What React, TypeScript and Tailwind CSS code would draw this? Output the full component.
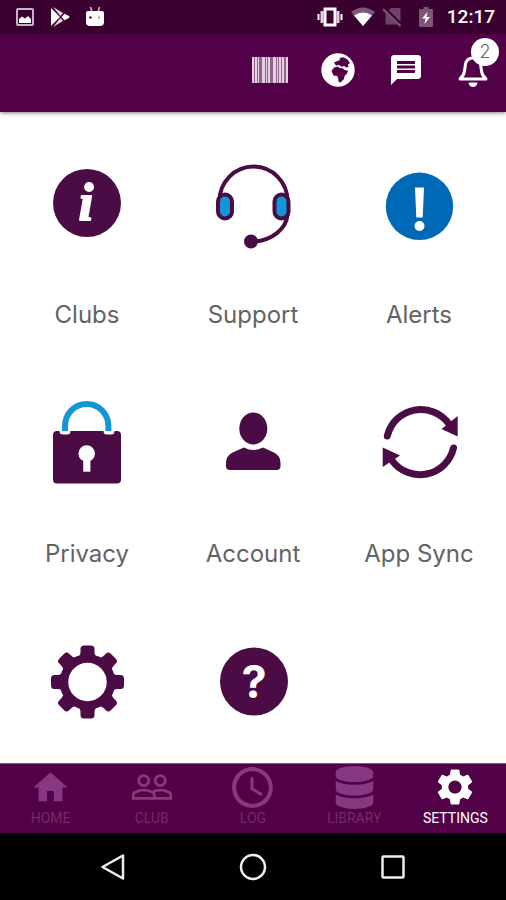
import { useState } from "react";
import { FaDatabase } from "react-icons/fa";
import { MdAccessTime, MdHome, MdMessage, MdPeopleOutline, MdSettings } from "react-icons/md";

const PURPLE = "#4b0b45";
const BLUE = "#1296d8";

const ClubsIcon = () => (
    <svg viewBox="0 0 88 88" className="w-22 h-22">
        <circle cx="44" cy="44" r="34" fill={PURPLE} />
        <text x="43" y="61" textAnchor="middle" fontSize="52" fontWeight="700" fontStyle="italic" fontFamily="Liberation Serif, serif" fill="#fff" stroke="#fff" strokeWidth="2" strokeLinejoin="round">i</text>
    </svg>
);

const SupportIcon = () => (
    <svg viewBox="0 0 88 88" className="w-22 h-22 overflow-visible" fill="none" stroke={PURPLE} strokeWidth="4">
        <path d="M10.5 42a34 34.500 0 0 1 68 0" />
        <path d="M78.500 56C77 70 63 81.500 45 82.500" />
        <rect x="9" y="35.500" width="14" height="24" rx="7" fill={BLUE} />
        <rect x="65.500" y="35.500" width="14" height="24" rx="7" fill={BLUE} />
        <circle cx="42" cy="82.500" r="5" fill={PURPLE} />
    </svg>
);

const AlertsIcon = () => (
    <svg viewBox="0 0 88 88" className="w-22 h-22">
        <circle cx="44.500" cy="47.300" r="33.700" fill="#0069b5" />
        <path d="M40 28.500h9l-1.300 30h-6.400z" fill="#fff" />
        <circle cx="44.500" cy="67" r="5" fill="#fff" />
    </svg>
);

const PrivacyIcon = () => (
    <svg viewBox="0 0 88 88" className="w-22 h-22">
        <path d="M14 33h2.500q0 3.500 3.500 3.500h4q3.500 0 3.500-3.500h33q0 3.500 3.500 3.500h4q3.500 0 3.500-3.500h2.500q4 0 4 4v44.500q0 4-4 4H14q-4 0-4-4V37q0-4 4-4z" fill={PURPLE} />
        <path d="M22 33v-5a21.700 22 0 0 1 43.400 0v5" fill="none" stroke={BLUE} strokeWidth="6" />
        <circle cx="43.700" cy="55.500" r="8.300" fill="#fff" />
        <path d="M40.200 60h7.200v13.700h-7.200z" fill="#fff" />
    </svg>
);

const AccountIcon = () => (
    <svg viewBox="0 0 88 88" className="w-22 h-22" fill={PURPLE}>
        <ellipse cx="44.300" cy="30.500" rx="14" ry="16" />
        <path d="M35 49.500q9.500 5 19 0L65 54.500q6.500 3.500 6.500 10V68q0 4-4 4H21q-4 0-4-4v-3.500q0-6.500 6.500-10z" />
    </svg>
);

const SyncIcon = () => (
    <svg viewBox="0 0 88 88" className="w-22 h-22">
        <g fill="none" stroke={PURPLE} strokeWidth="7" strokeLinecap="round">
            <path d="M12.300 38A34.500 34.500 0 0 1 74 26" />
            <path d="M78.500 50A34.500 34.500 0 0 1 17 62.500" />
        </g>
        <path d="M82.700 18v20.500L66.500 31z" fill={PURPLE} />
        <path d="M7.700 49.500v19.500L25 57.500z" fill={PURPLE} />
    </svg>
);

const GearIcon = () => (
    <svg viewBox="0 0 88 88" className="w-22 h-22">
        <circle cx="44.500" cy="45" r="23.500" fill="none" stroke={PURPLE} strokeWidth="8.500" />
        {[0, 45, 90, 135, 180, 225, 270, 315].map((angle) => (
            <path key={angle} transform={`rotate(${angle} 44.5 45)`} d="M33.500 21q4-2 4-6v-3q0-3.500 3.500-3.500h7q3.500 0 3.500 3.500v3q0 4 4 6z" fill={PURPLE} />
        ))}
    </svg>
);

const HelpIcon = () => (
    <svg viewBox="0 0 88 88" className="w-22 h-22">
        <circle cx="45" cy="44.500" r="34" fill={PURPLE} />
        <text x="45" y="61" textAnchor="middle" fontSize="45" fontWeight="700" fontFamily="Inter, sans-serif" fill="#fff">?</text>
    </svg>
);

const tiles = [
    { name: "Clubs", icon: ClubsIcon },
    { name: "Support", icon: SupportIcon },
    { name: "Alerts", icon: AlertsIcon },
    { name: "Privacy", icon: PrivacyIcon },
    { name: "Account", icon: AccountIcon },
    { name: "App Sync", icon: SyncIcon },
    { icon: GearIcon },
    { icon: HelpIcon },
];

const tabs = [
    { name: "HOME", icon: MdHome, size: 41 },
    { name: "CLUB", icon: MdPeopleOutline, size: 44 },
    { name: "LOG", icon: MdAccessTime, size: 49 },
    { name: "LIBRARY", icon: FaDatabase, size: 43 },
    { name: "SETTINGS", icon: MdSettings, size: 44 },
];

function StatusBar() {
    return (
        <div className="h-[34px] shrink-0 bg-[#3a0030] flex items-center justify-between pl-4 pr-[11px] text-white">
            <div className="flex items-center gap-4">
                <svg viewBox="0 0 18 18" width="18" height="18">
                    <rect x="1" y="1" width="16" height="16" rx="1" fill="none" stroke="#c9b3c6" strokeWidth="2" />
                    <path d="M3 15v-4l3-2.500 3 2 3-2.500 3 3V15z" fill="#fff" />
                </svg>
                <svg viewBox="0 0 20 20" width="20" height="20">
                    <path d="M1 1l9 9-9 9z" fill="#fff" />
                    <path d="M3 0l10 6-2.500 3zM3 20l10-6-2.500-3z" fill="#e6d8e4" />
                    <path d="M11.500 10L14.500 6.800 19 9q1 1 0 2l-4.500 2.200z" fill="#fff" />
                </svg>
                <svg viewBox="0 0 18 20" width="18" height="20">
                    <path d="M4.500 0l1.500 5M13.500 0L12 5" stroke="#d8c6d5" strokeWidth="1.500" />
                    <path d="M0 6q0-2 2-2h14q2 0 2 2v9q0 4-4 4H4q-4 0-4-4z" fill="#fff" />
                    <circle cx="4.500" cy="10.500" r="1.200" fill="#3a0030" />
                    <circle cx="13" cy="10.500" r="1" fill="#8a6f86" />
                </svg>
            </div>
            <div className="flex items-center">
                <svg viewBox="0 0 26 20" width="26" height="20" className="mr-2">
                    <rect x="8" y="2" width="10" height="16" fill="none" stroke="#fff" strokeWidth="3" />
                    <path d="M5 4v12M21 4v12" stroke="#e0d2de" strokeWidth="3" />
                    <path d="M1.500 7v6M24.500 7v6" stroke="#fff" strokeWidth="2" />
                </svg>
                <svg viewBox="0 0 24 20" width="24" height="20" className="mr-2">
                    <path d="M12 19L0 5q12-9 24 0z" fill="#7d5577" />
                    <path d="M12 19L3 8.500q9-6 18 0z" fill="#fff" />
                </svg>
                <svg viewBox="0 0 20 20" width="20" height="20" className="mr-4">
                    <path d="M8 1h8q1.500 0 1.500 1.500v15H2.500V6.500z" fill="#6d4468" />
                    <path d="M1 1.500L19 19" stroke="#3a0030" strokeWidth="4" />
                    <path d="M0 2l17.500 17" stroke="#7d5577" strokeWidth="2" />
                </svg>
                <svg viewBox="0 0 14 20" width="14" height="20" className="mr-[14px]">
                    <path d="M4.500 0h5v2H13q1 0 1 1v16q0 1-1 1H1q-1 0-1-1V3q0-1 1-1h3.500z" fill="#7d5577" />
                    <path d="M8.500 5L3 11.500h3.500L5.500 17 11 10H7.500z" fill="#fff" />
                </svg>
                <span className="font-[Roboto,sans-serif] text-[19px] leading-5 font-medium">12:17</span>
            </div>
        </div>
    );
}

function Header({ unread }: { unread: number }) {
    // x and width of each bar in the barcode
    const bars = [[0, 2], [3, 2], [6, 1], [10, 3], [14, 1], [16, 2], [21, 3], [25, 1], [27, 2], [30, 2], [34, 2]];

    return (
        <header className="relative z-10 h-[78px] shrink-0 bg-[#520048] shadow-[0_1px_4px_rgba(0,0,0,0.5)] flex items-center justify-end pb-[7px] text-white">
            <button aria-label="Barcode" className="w-[68px] h-12 flex items-center justify-center">
                <svg viewBox="0 0 36 26" width="36" height="26">
                    <rect width="36" height="26" fill="#94608e" />
                    {bars.map(([x, w]) => (
                        <rect key={x} x={x} width={w} height="26" fill="#e3d0e1" />
                    ))}
                </svg>
            </button>
            <button aria-label="World" className="w-[68px] h-12 flex items-center justify-center">
                <svg viewBox="0 0 34 34" width="34" height="34">
                    <circle cx="17" cy="17" r="16.700" fill="#fff" />
                    <path d="M13 9.500l3.500-1.500 2.500-1-.5-2 4-.8 4 2.300 2.500 3.500-2 1.500.5 2.500-2.500.5-1.500-1.500-3 .8-2.500-1.800-3 .5z" fill="#520048" />
                    <path d="M10.500 18l2.500-3.500 4-1 1.500 1.500 3 .2 2 1.500 3.500 1.300-1 2.500-2.500 2.500-.5 3-3.500 3.500-1.800-.5-.4-3-1-3-3.800-.5z" fill="#520048" />
                </svg>
            </button>
            <button aria-label="Messages" className="w-[68px] h-12 flex items-center justify-center">
                <MdMessage size={36} />
            </button>
            <button aria-label="Notifications" className="relative w-[66px] h-12 flex items-center justify-center">
                <svg viewBox="0 0 32 34" width="32" height="34" fill="none" stroke="#fff" strokeWidth="3" strokeLinejoin="round">
                    <path d="M3 26q4-3.500 4.500-8l1-7q1.500-6 7.500-6t7.500 6l1 7q.5 4.500 4.500 8z" />
                    <path d="M11.500 29.500h9q-.8 4.500-4.500 4.500t-4.500-4.500z" fill="#fff" stroke="none" />
                </svg>
                <span className="absolute -top-2 right-[7px] w-7 h-7 rounded-full bg-white text-[#666] font-[Inter,sans-serif] text-lg leading-7 font-light text-center">{unread}</span>
            </button>
        </header>
    );
}

export default function App() {
    const [active, setActive] = useState("SETTINGS");

    return (
        <div className="h-screen flex flex-col bg-white overflow-hidden">
            <StatusBar />
            <Header unread={2} />

            <main className="flex-1 min-h-0 overflow-hidden px-1 grid grid-cols-3 content-start">
                {tiles.map((tile, index) => (
                    <button key={index} className="h-[239px] pt-[47px] flex flex-col items-center">
                        <tile.icon />
                        {tile.name && (
                            <span className="mt-[54px] font-[Inter,sans-serif] text-2xl leading-7 text-[#636363] whitespace-nowrap">{tile.name}</span>
                        )}
                    </button>
                ))}
            </main>

            <nav className="h-[70px] shrink-0 bg-[#520048] border-t border-[#8a5a84] pt-px grid grid-cols-5 content-start font-[Roboto,sans-serif]">
                {tabs.map((tab) => (
                    <button
                        key={tab.name}
                        onClick={() => setActive(tab.name)}
                        className={`flex flex-col items-center ${active === tab.name ? "text-white" : "text-[#883880]"}`}
                    >
                        <span className="h-11 flex items-center justify-center">
                            <tab.icon size={tab.size} />
                        </span>
                        <span className={`mt-px text-sm leading-4 ${active === tab.name ? "" : "text-[#75296d]"}`}>{tab.name}</span>
                    </button>
                ))}
            </nav>

            <div className="h-[67px] shrink-0 bg-black flex items-center justify-center gap-28">
                <button aria-label="Back">
                    <svg viewBox="0 0 28 28" width="28" height="28" fill="none" stroke="#eee" strokeWidth="2.500" strokeLinejoin="round">
                        <path d="M24 2.500v23L3.500 14z" />
                    </svg>
                </button>
                <button aria-label="Home">
                    <svg viewBox="0 0 28 28" width="28" height="28" fill="none" stroke="#eee" strokeWidth="2.500">
                        <circle cx="14" cy="14" r="12" />
                    </svg>
                </button>
                <button aria-label="Recent apps">
                    <svg viewBox="0 0 28 28" width="28" height="28" fill="none" stroke="#eee" strokeWidth="2.500">
                        <rect x="3.500" y="3.500" width="21" height="21" rx="1" />
                    </svg>
                </button>
            </div>
        </div>
    );
}
